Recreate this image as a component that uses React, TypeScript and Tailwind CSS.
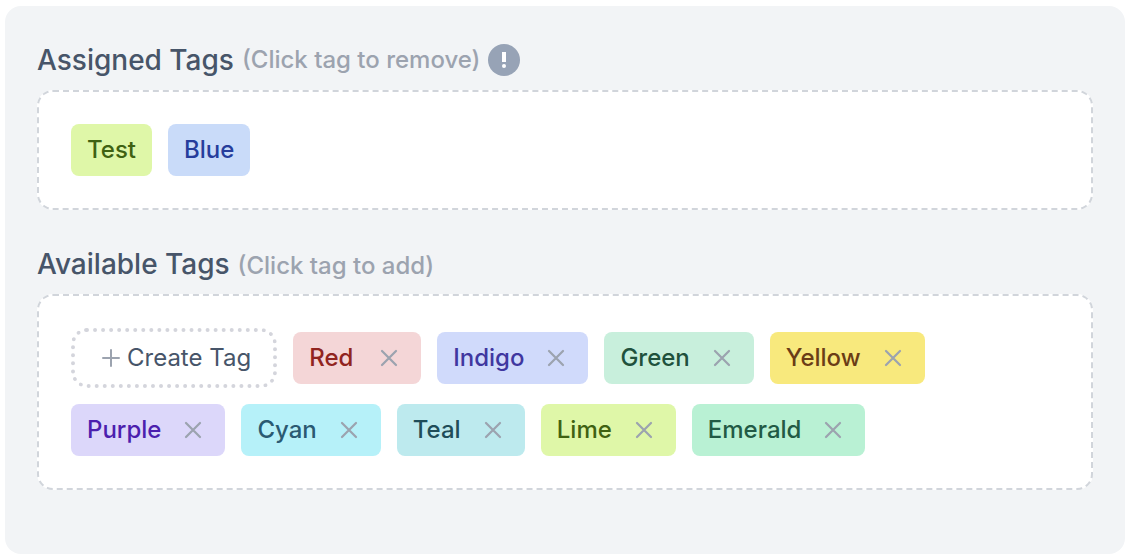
import React from "react";

type Tag = { name: string; tone: string };

const assigned: Tag[] = [
  { name: "Test", tone: "bg-[#dff7a8] text-[#3f6212]" },
  { name: "Blue", tone: "bg-[#c9dbf9] text-[#263d9c]" },
];

const available: Tag[] = [
  { name: "Red", tone: "bg-[#f4d6d7] text-[#912420]" },
  { name: "Indigo", tone: "bg-[#d0dafb] text-[#3f37a0]" },
  { name: "Green", tone: "bg-[#c8efdc] text-[#20513c]" },
  { name: "Yellow", tone: "bg-[#f8e97d] text-[#6b3d16]" },
  { name: "Purple", tone: "bg-[#dcd7fa] text-[#4c1fae]" },
  { name: "Cyan", tone: "bg-[#b6f1f9] text-[#2a5a72]" },
  { name: "Teal", tone: "bg-[#bdeaee] text-[#1f4d59]" },
  { name: "Lime", tone: "bg-[#dff7a8] text-[#3f6212]" },
  { name: "Emerald", tone: "bg-[#b9f1d4] text-[#225a45]" },
];

function CloseIcon() {
  return (
    <svg viewBox="0 0 32 32" className="size-8" fill="none" stroke="currentColor" strokeWidth="2.25" strokeLinecap="round" aria-hidden="true">
      <path d="M9 23 23 9M9 9l14 14" />
    </svg>
  );
}

function PlusIcon() {
  return (
    <svg viewBox="0 0 28 28" className="size-7 text-[#9ca3af]" fill="none" stroke="currentColor" strokeWidth="2" strokeLinecap="round" aria-hidden="true">
      <path d="M14 6v16M6 14h16" />
    </svg>
  );
}

function AlertIcon() {
  return (
    <svg viewBox="0 0 32 32" className="size-8" aria-hidden="true">
      <circle cx="16" cy="16" r="16" fill="#97a3b6" />
      <path d="M14 8h4v10h-4z" fill="#fff" />
      <circle cx="16" cy="22" r="2" fill="#fff" />
    </svg>
  );
}

const titleClass = "text-[28px] leading-9 font-medium text-[#475569]";
const hintClass = "text-2xl font-medium text-[#9ca3af]";
const boxClass =
  "flex flex-wrap items-center gap-4 rounded-2xl border-2 border-dashed border-[#d1d5db] bg-white p-8";

export default function App() {
  return (
    <main className="pt-1.5 pr-[9px] pb-1.5 pl-[5px] font-['Inter',sans-serif]">
      <div className="flex flex-col gap-9 rounded-2xl bg-[#f2f4f6] px-8 pt-8 pb-16">
        <section className="flex flex-col gap-2">
          <div className="flex h-11 items-center gap-2">
            <h2 className={titleClass}>Assigned Tags</h2>
            <span className={hintClass}>(Click tag to remove)</span>
            <button type="button" aria-label="About assigned tags">
              <AlertIcon />
            </button>
          </div>
          <div className={boxClass}>
            {assigned.map((t) => (
              <button key={t.name} type="button" className={`h-13 rounded-lg px-4 text-2xl font-medium ${t.tone}`}>
                {t.name}
              </button>
            ))}
          </div>
        </section>
        <section className="flex flex-col gap-3">
          <div className="flex h-9 items-baseline gap-2">
            <h2 className={titleClass}>Available Tags</h2>
            <span className={hintClass}>(Click tag to add)</span>
          </div>
          <div className={boxClass}>
            <button
              type="button"
              className="flex h-15 items-center gap-0.5 rounded-2xl border-4 border-dotted border-[#d4d5dc] px-[22px] text-2xl text-[#475569]"
            >
              <PlusIcon />
              Create Tag
            </button>
            {available.map((t) => (
              <div
                key={t.name}
                className={`flex h-13 min-w-32 items-center justify-between gap-4 rounded-lg px-4 text-2xl font-medium ${t.tone}`}
              >
                <button type="button">{t.name}</button>
                <button type="button" aria-label={`Delete ${t.name}`} className="text-[#9ca3af]">
                  <CloseIcon />
                </button>
              </div>
            ))}
          </div>
        </section>
      </div>
    </main>
  );
}
